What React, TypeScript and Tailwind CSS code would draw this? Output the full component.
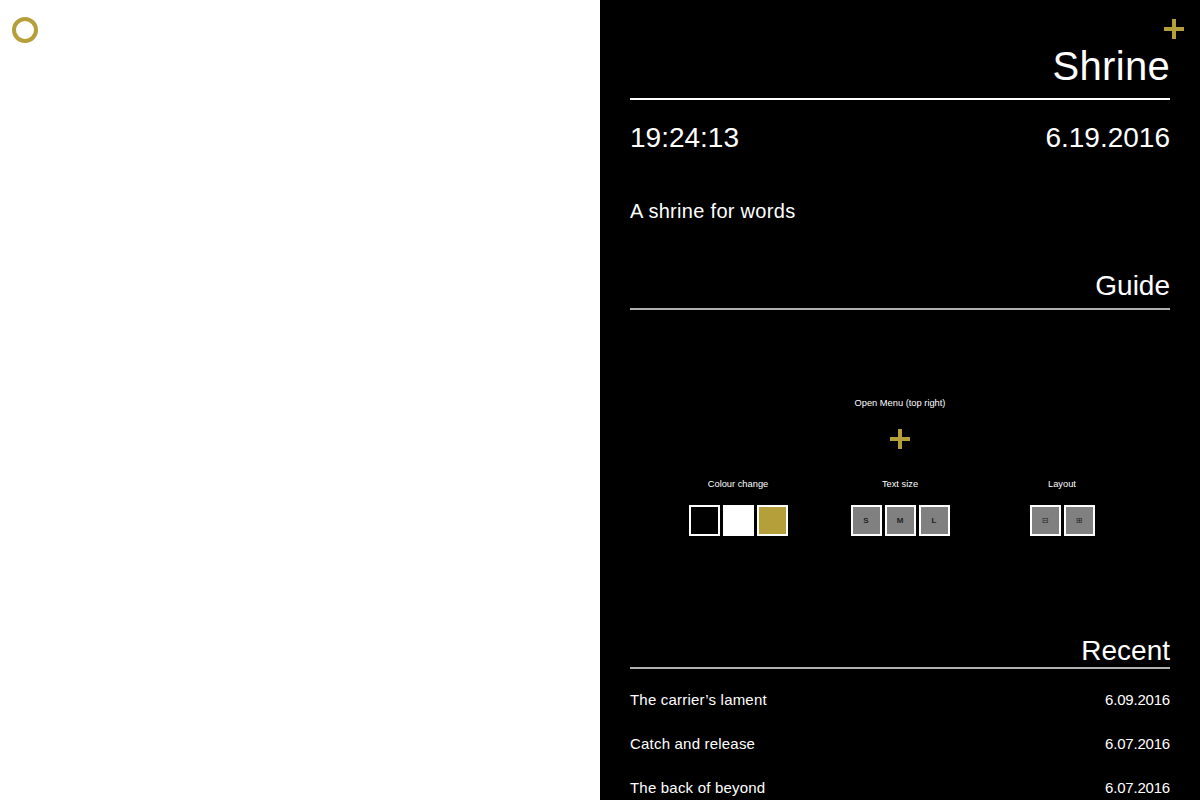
import React from "react";

const gold = "#b59f3b";

function Plus({ size = 20, stroke = 4 }: { size?: number; stroke?: number }) {
  return (
    <svg width={size} height={size} viewBox="0 0 20 20">
      <rect x={10 - stroke / 2} y={0} width={stroke} height={20} fill={gold} />
      <rect x={0} y={10 - stroke / 2} width={20} height={stroke} fill={gold} />
    </svg>
  );
}

export default function App() {
  const font = { fontFamily: "'Liberation Sans', Arial, sans-serif" };
  return (
    <div className="flex w-[1200px] h-[800px] overflow-hidden" style={font}>
      <div className="w-[600px] h-full bg-white relative">
        <div className="absolute left-[12px] top-[17px] w-[26px] h-[26px] rounded-full border-[4px] border-[#b59f3b]" />
      </div>
      <div className="w-[600px] h-full bg-black text-white relative px-[30px]">
        <div className="absolute right-[16px] top-[19px]">
          <Plus size={20} stroke={4} />
        </div>
        <div className="pt-[42px] flex justify-end">
          <h1 className="text-[40px] leading-[48px] font-normal tracking-[0.3px]">Shrine</h1>
        </div>
        <div className="mt-[8px] h-[2px] bg-white" />
        <div className="mt-[20px] flex justify-between text-[28px] leading-[36px]">
          <span>19:24:13</span>
          <span>6.19.2016</span>
        </div>
        <div className="mt-[42px] text-[20px] leading-[26px] tracking-[0.3px]">A shrine for words</div>
        <div className="mt-[44px] flex justify-end text-[28px] leading-[36px]">Guide</div>
        <div className="mt-[4px] h-[2px] bg-[#b0b0b0]" />
        <div className="mt-[87px] flex flex-col items-center">
          <div className="text-[9.3px] leading-[12px]">Open Menu (top right)</div>
          <div className="mt-[20px]">
            <Plus size={20} stroke={4} />
          </div>
        </div>
        <div className="mt-[29px] flex justify-center">
          <div className="w-[162px] flex flex-col items-center">
            <div className="text-[9.3px] leading-[12px]">Colour change</div>
            <div className="mt-[15px] flex gap-[3px]">
              <div className="w-[31px] h-[31px] border-2 border-white bg-black" />
              <div className="w-[31px] h-[31px] border-2 border-white bg-white" />
              <div className="w-[31px] h-[31px] border-2 border-white bg-[#b59f3b]" />
            </div>
          </div>
          <div className="w-[162px] flex flex-col items-center">
            <div className="text-[9.3px] leading-[12px]">Text size</div>
            <div className="mt-[15px] flex gap-[3px]">
              {["S", "M", "L"].map((t) => (
                <div key={t} className="w-[31px] h-[31px] border-2 border-white bg-[#808080] flex items-center justify-center text-[8px] font-bold text-[#222]">
                  {t}
                </div>
              ))}
            </div>
          </div>
          <div className="w-[162px] flex flex-col items-center">
            <div className="text-[9.3px] leading-[12px]">Layout</div>
            <div className="mt-[15px] flex gap-[3px]">
              {["⊟", "⊞"].map((t) => (
                <div key={t} className="w-[31px] h-[31px] border-2 border-white bg-[#808080] flex items-center justify-center text-[8px] text-[#222]" style={{ fontFamily: "'DejaVu Sans', sans-serif" }}>
                  {t}
                </div>
              ))}
            </div>
          </div>
        </div>
        <div className="mt-[97px] flex justify-end text-[28px] leading-[36px]">Recent</div>
        <div className="mt-[-2px] h-[2px] bg-[#b0b0b0]" />
        <div className="mt-[-1px] flex flex-col text-[15px] leading-[20px]">
          {[
            ["The carrier’s lament", "6.09.2016"],
            ["Catch and release", "6.07.2016"],
            ["The back of beyond", "6.07.2016"],
          ].map(([a, b]) => (
            <div key={a} className="flex justify-between h-[44px] items-center pt-[20px]">
              <span className="tracking-[0.2px]">{a}</span>
              <span className="tracking-[-0.2px]">{b}</span>
            </div>
          ))}
        </div>
      </div>
    </div>
  );
}
